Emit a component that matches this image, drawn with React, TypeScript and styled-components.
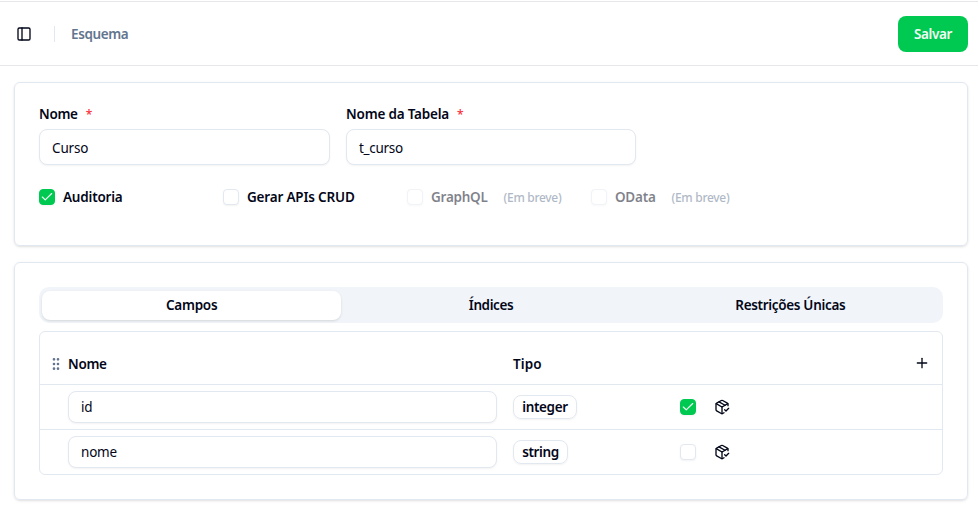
import React from "react";
import styled, { createGlobalStyle } from "styled-components";
import { Check, GripVertical, PackageCheck, PanelLeft, Plus } from "lucide-react";

const GlobalStyle = createGlobalStyle`
  *, *::before, *::after { box-sizing: border-box; }
  body {
    margin: 0;
    background: #fff;
    color: #020618;
    font-family: "Segoe UI", "Noto Sans", "Open Sans", sans-serif;
    font-size: 14px;
    line-height: 20px;
  }
  button, input { font: inherit; color: inherit; letter-spacing: inherit; }
  svg { display: block; flex-shrink: 0; }
`;

const Text = styled.span<{ $track?: number; $muted?: boolean }>`
  font-size: 13.5px;
  font-weight: 600;
  line-height: 20px;
  white-space: nowrap;
  letter-spacing: ${(p) => p.$track ?? 0}px;
  color: ${(p) => (p.$muted ? "#62748e" : "inherit")};
`;

const Page = styled.div`
  height: 510px;
  padding-top: 1px;
  overflow: hidden;
`;

const Header = styled.header`
  display: flex;
  align-items: center;
  height: 65px;
  padding: 0 10px 0 16px;
  border-top: 1px solid #e5e7eb;
  border-bottom: 1px solid #e5e7eb;
`;

const Divider = styled.div`
  width: 1px;
  height: 16px;
  margin: 0 16px 0 22px;
  background: #e2e8f0;
`;

const SaveButton = styled.button`
  width: 70px;
  height: 36px;
  margin-left: auto;
  padding: 0;
  border: 0;
  border-radius: 8px;
  background: #00c951;
  color: #f0fdf4;
`;

const Main = styled.main`
  display: flex;
  flex-direction: column;
  gap: 16px;
  padding: 16px 10px 0 14px;
`;

const Card = styled.section<{ $height: number }>`
  height: ${(p) => p.$height}px;
  padding: 24px;
  border: 1px solid #e2e8f0;
  border-radius: 6px;
  box-shadow: 0 1px 3px rgba(0, 0, 0, 0.1), 0 1px 2px -1px rgba(0, 0, 0, 0.1);
`;

const FieldGrid = styled.div`
  display: grid;
  grid-template-columns: 291px 290px;
  column-gap: 16px;
  margin-top: -3px;
`;

const FieldLabel = styled.label`
  display: flex;
  gap: 8px;
  height: 25px;
`;

const Required = styled.span`
  padding-top: 1px;
  color: #fb2c36;
  font-size: 12px;
  font-weight: 500;
`;

const TextInput = styled.input<{ $height: number; $track?: number }>`
  display: block;
  width: 100%;
  height: ${(p) => p.$height}px;
  padding: ${(p) => (p.$height > 32 ? "2px 12px 0" : "0 12px")};
  border: 1px solid #e2e8f0;
  border-radius: 8px;
  outline: 0;
  background: #fff;
  font-size: 13.5px;
  box-shadow: 0 1px 2px rgba(0, 0, 0, 0.05);
  letter-spacing: ${(p) => p.$track ?? 0}px;
`;

const OptionGrid = styled.div`
  display: grid;
  grid-template-columns: repeat(4, 184px);
  margin-top: 22px;
`;

const Option = styled.label<{ $disabled?: boolean }>`
  display: flex;
  align-items: center;
  gap: 8px;
  opacity: ${(p) => (p.$disabled ? 0.5 : 1)};
`;

const Hint = styled.small`
  margin-left: 8px;
  padding-top: 1px;
  color: #62748e;
  font-size: 12px;
  font-weight: 500;
  line-height: 16px;
  letter-spacing: -0.3px;
  white-space: nowrap;
`;

const Box = styled.span<{ $checked?: boolean }>`
  display: grid;
  place-items: center;
  flex: 0 0 16px;
  width: 16px;
  height: 16px;
  border: 1px solid ${(p) => (p.$checked ? "#00c951" : "#e2e8f0")};
  border-radius: 4px;
  background: ${(p) => (p.$checked ? "#00c951" : "#fff")};
  color: #f0fdf4;
  box-shadow: 0 1px 2px rgba(0, 0, 0, 0.05);
`;

const TabList = styled.div`
  display: grid;
  grid-template-columns: repeat(3, 1fr);
  height: 36px;
  padding: 3px;
  border-radius: 10px;
  background: #f1f5f9;
`;

const Tab = styled.button<{ $active?: boolean }>`
  height: 29px;
  margin-top: 1px;
  padding: 0 0 2px;
  border: 0;
  border-radius: 8px;
  background: ${(p) => (p.$active ? "#fff" : "transparent")};
  box-shadow: ${(p) => (p.$active ? "0 1px 3px rgba(0, 0, 0, 0.1), 0 1px 2px -1px rgba(0, 0, 0, 0.1)" : "none")};
`;

const Table = styled.div`
  margin-top: 8px;
  border: 1px solid #e2e8f0;
  border-radius: 6px;
`;

const Row = styled.div<{ $head?: boolean }>`
  display: grid;
  grid-template-columns: 28px 429px 183px 16px 1fr;
  align-items: center;
  height: ${(p) => (p.$head ? 53 : 45)}px;
  padding-top: ${(p) => (p.$head ? 12 : 0)}px;
  border-bottom: 1px solid #e2e8f0;
  &:last-child { height: 44px; border-bottom: 0; }
`;

const Grip = styled.div`
  display: grid;
  justify-content: center;
  padding-left: 4px;
  color: #62748e;
`;

const TypeCell = styled.div`
  display: flex;
  padding-left: 16px;
`;

const ActionCell = styled.div<{ $end?: boolean }>`
  display: flex;
  justify-content: ${(p) => (p.$end ? "flex-end" : "flex-start")};
  padding: ${(p) => (p.$end ? "0 12px 2px 0" : "0 0 0 18px")};
`;

const Badge = styled.span<{ $width: number }>`
  display: grid;
  place-items: center;
  width: ${(p) => p.$width}px;
  height: 24px;
  border: 1px solid #e2e8f0;
  border-radius: 8px;
  box-shadow: 0 1px 2px rgba(0, 0, 0, 0.05);
`;

function Checkbox({ checked }: { checked?: boolean }) {
  return <Box $checked={checked}>{checked && <Check size={14} strokeWidth={2} />}</Box>;
}

const options = [
  { label: "Auditoria", track: -0.2, checked: true },
  { label: "Gerar APIs CRUD", track: -0.18 },
  { label: "GraphQL", track: -0.25, disabled: true },
  { label: "OData", track: -0.25, disabled: true },
];

const tabs = [
  { label: "Campos", track: -0.25 },
  { label: "Índices", track: -0.4 },
  { label: "Restrições Únicas", track: -0.32 },
];

const columns = [
  { name: "id", type: "integer", width: 64, checked: true },
  { name: "nome", type: "string", width: 55, checked: false },
];

export default function App() {
  return (
    <>
      <GlobalStyle />
      <Page>
        <Header>
          <PanelLeft size={16} />
          <Divider />
          <Text $muted $track={-0.4}>Esquema</Text>
          <SaveButton><Text $track={-0.35}>Salvar</Text></SaveButton>
        </Header>
        <Main>
          <Card $height={164}>
            <FieldGrid>
              <div>
                <FieldLabel><Text $track={-0.3}>Nome</Text><Required>*</Required></FieldLabel>
                <TextInput $height={36} $track={-0.15} defaultValue="Curso" />
              </div>
              <div>
                <FieldLabel><Text $track={-0.2}>Nome da Tabela</Text><Required>*</Required></FieldLabel>
                <TextInput $height={36} $track={-0.3} defaultValue="t_curso" />
              </div>
            </FieldGrid>
            <OptionGrid>
              {options.map((o) => (
                <Option key={o.label} $disabled={o.disabled}>
                  <Checkbox checked={o.checked} />
                  <Text $track={o.track}>{o.label}</Text>
                  {o.disabled && <Hint>(Em breve)</Hint>}
                </Option>
              ))}
            </OptionGrid>
          </Card>
          <Card $height={238}>
            <TabList>
              {tabs.map((t, i) => (
                <Tab key={t.label} $active={i === 0}><Text $track={t.track}>{t.label}</Text></Tab>
              ))}
            </TabList>
            <Table>
              <Row $head>
                <Grip><GripVertical size={16} /></Grip>
                <Text $track={-0.3}>Nome</Text>
                <TypeCell><Text $track={0.1}>Tipo</Text></TypeCell>
                <span />
                <ActionCell $end><Plus size={16} /></ActionCell>
              </Row>
              {columns.map((c) => (
                <Row key={c.name}>
                  <span />
                  <TextInput $height={32} $track={-0.2} defaultValue={c.name} />
                  <TypeCell><Badge $width={c.width}><Text $track={-0.38}>{c.type}</Text></Badge></TypeCell>
                  <Checkbox checked={c.checked} />
                  <ActionCell><PackageCheck size={16} /></ActionCell>
                </Row>
              ))}
            </Table>
          </Card>
        </Main>
      </Page>
    </>
  );
}
